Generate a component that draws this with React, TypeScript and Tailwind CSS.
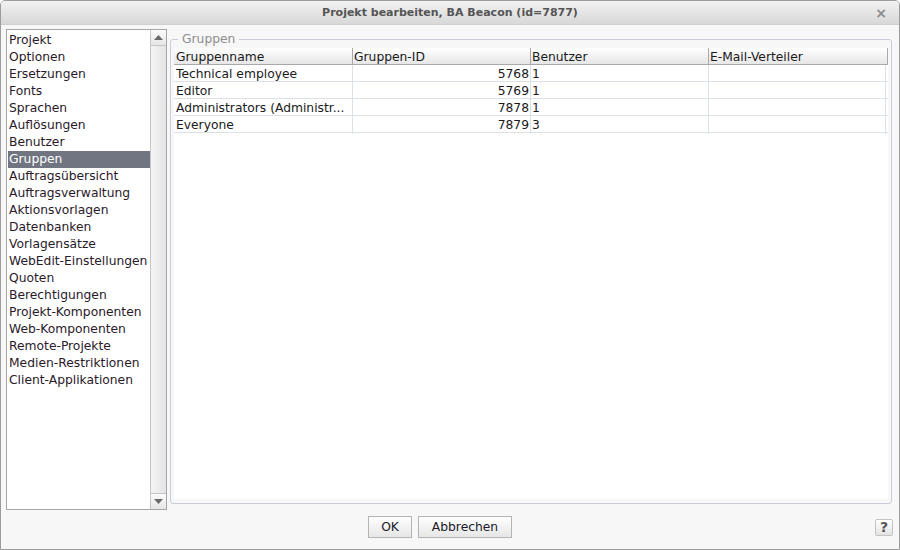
import React from 'react';

const sections = [
	'Projekt',
	'Optionen',
	'Ersetzungen',
	'Fonts',
	'Sprachen',
	'Auflösungen',
	'Benutzer',
	'Gruppen',
	'Auftragsübersicht',
	'Auftragsverwaltung',
	'Aktionsvorlagen',
	'Datenbanken',
	'Vorlagensätze',
	'WebEdit-Einstellungen',
	'Quoten',
	'Berechtigungen',
	'Projekt-Komponenten',
	'Web-Komponenten',
	'Remote-Projekte',
	'Medien-Restriktionen',
	'Client-Applikationen',
];

const groups = [
	{ name: 'Technical employee', id: '5768', users: '1', mail: '' },
	{ name: 'Editor', id: '5769', users: '1', mail: '' },
	{ name: 'Administrators (Administr...', id: '7878', users: '1', mail: '' },
	{ name: 'Everyone', id: '7879', users: '3', mail: '' },
];

function Arrow({ up }: { up?: boolean }) {
	return (
		<svg width="9" height="5" viewBox="0 0 9 5">
			{up ? <path d="M0 5 L4.5 0 L9 5 Z" fill="#6a6a6a" /> : <path d="M0 0 L9 0 L4.5 5 Z" fill="#6a6a6a" />}
		</svg>
	);
}

export default function App() {
	return (
		<div
			className="w-[900px] h-[550px] bg-[#f7f7f7] border border-[#9c9c9c] rounded-t-[5px] flex flex-col overflow-hidden text-[12.3px] text-[#1a1a1a]"
			style={{ fontFamily: '"DejaVu Sans", Verdana, sans-serif' }}
		>
			{/* Title bar */}
			<div className="h-[24px] shrink-0 flex items-center bg-gradient-to-b from-[#f2f2f2] to-[#d8d8d8] border-b border-[#cfcfcf] relative">
				<div className="flex-1 text-center font-bold text-[#555555] text-[11px] pt-[1px]">
					Projekt bearbeiten, BA Beacon (id=7877)
				</div>
				<div className="absolute right-[12px] top-[4px] text-[#8c8c8c] font-bold text-[14px] leading-[16px]">×</div>
			</div>

			{/* Main area */}
			<div className="h-[485px] shrink-0 flex pt-[4px] pl-[5px] pr-[7px]">
				{/* Section list */}
				<div className="w-[161px] h-[481px] border border-[#a6a6a6] bg-white flex">
					<div className="flex-1 pt-[2px] pl-[1px]">
						{sections.map((s) => (
							<div
								key={s}
								className={
									s === 'Gruppen'
										? 'h-[17px] leading-[17px] pl-[1px] bg-[#707581] text-white whitespace-nowrap'
										: 'h-[17px] leading-[17px] pl-[1px] text-[#2a1a2a] whitespace-nowrap'
								}
							>
								{s}
							</div>
						))}
					</div>
					<div className="w-[16px] flex flex-col border-l border-[#c6c6c6] bg-gradient-to-r from-[#f4f4f4] to-[#e4e4e4]">
						<div className="h-[16px] flex items-center justify-center border-b border-[#c6c6c6] bg-gradient-to-b from-[#fbfbfb] to-[#e6e6e6]">
							<Arrow up />
						</div>
						<div className="flex-1" />
						<div className="h-[16px] flex items-center justify-center border-t border-[#c6c6c6] bg-gradient-to-b from-[#fbfbfb] to-[#e6e6e6]">
							<Arrow />
						</div>
					</div>
				</div>

				{/* Group panel */}
				<fieldset className="ml-[3px] flex-1 h-[473px] mt-[2px] border border-[#c8cdd6] rounded-[3px] px-[3px] pb-[4px] min-w-0 flex flex-col">
					<legend className="ml-[4px] px-[4px] text-[#8e8e8e] leading-[16px]">Gruppen</legend>
					<div className="flex-1 bg-white mt-[1px] flex flex-col">
						<div className="grid grid-cols-[178px_178px_178px_178px] h-[17px] bg-gradient-to-b from-white to-[#e6e6e6] border-b border-[#a9a9a9] border-r">
							{['Gruppenname', 'Gruppen-ID', 'Benutzer', 'E-Mail-Verteiler'].map((h, i) => (
								<div
									key={h}
									className={
										i === 0
											? 'leading-[18px] pl-[2px] whitespace-nowrap'
											: 'leading-[18px] pl-[1px] border-l border-[#a9a9a9] whitespace-nowrap'
									}
								>
									{h}
								</div>
							))}
						</div>
						{groups.map((g) => (
							<div key={g.id} className="grid grid-cols-[178px_178px_178px_178px] h-[17px] border-b border-[#dce0e7]">
								<div className="leading-[18px] pl-[2px] whitespace-nowrap overflow-hidden">{g.name}</div>
								<div className="leading-[18px] pr-[1px] text-right border-l border-[#dce0e7]">{g.id}</div>
								<div className="leading-[18px] pl-[1px] border-l border-[#dce0e7]">{g.users}</div>
								<div className="leading-[18px] pl-[1px] border-l border-r border-[#dce0e7]">{g.mail}</div>
							</div>
						))}
					</div>
				</fieldset>
			</div>

			{/* Footer */}
			<div className="flex-1 flex items-start pl-[367px] pr-[6px]">
				<div className="flex gap-[6px] mt-[6px]">
					<button className="w-[44px] h-[22px] border border-[#b4b4b4] bg-gradient-to-b from-white to-[#e6e6e6] text-[#1a1a2a]">
						OK
					</button>
					<button className="w-[94px] h-[22px] border border-[#b4b4b4] bg-gradient-to-b from-white to-[#e6e6e6] text-[#1a1a2a]">
						Abbrechen
					</button>
				</div>
				<button className="ml-auto mt-[9px] w-[18px] h-[17px] border border-[#c4c4c4] rounded-[2px] bg-gradient-to-b from-white to-[#e2e2e2] text-[#555555] font-bold text-[14px] leading-[15px]">
					?
				</button>
			</div>
		</div>
	);
}
